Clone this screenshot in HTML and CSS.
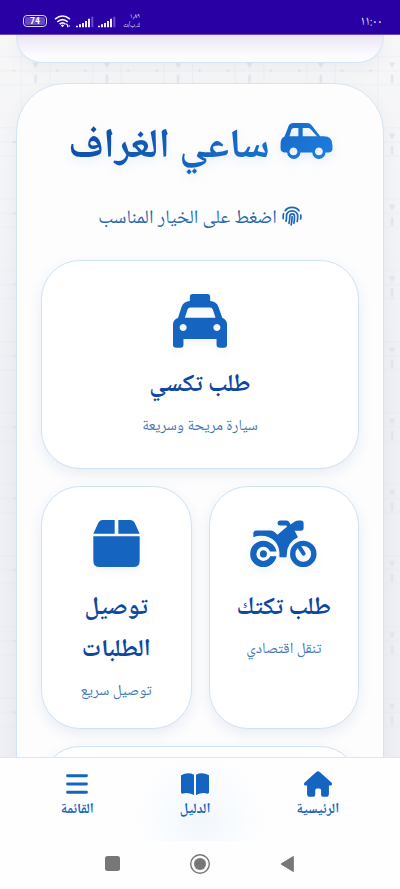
FILE: index.html
```html
<!DOCTYPE html>
<html lang="ar" dir="rtl">
<head>
<meta charset="utf-8">
<meta name="viewport" content="width=device-width">
<title>ساعي الغراف</title>
<link rel="stylesheet" href="styles.css">
</head>
<body>
<div class="screen">
  <header class="status">
    <span class="clock">١١:٠٠</span>
    <div class="indicators">
      <div class="speed"><b>١٫٨٩</b><b>ك.ب/ث</b></div>
      <svg class="signals" viewBox="0 0 120 36" width="40" height="12">
        <path fill="#efeafc" d="M0 29h6v5H0zM9 25h6v9H9zM18 21h6v13h-6zM27 15h6v19h-6zM36 8h6v26h-6zM66 29h6v5h-6zM75 25h6v9h-6zM84 21h6v13h-6zM93 15h6v19h-6zM102 8h6v26h-6z"/>
        <path fill="#6c4cc9" d="M46 2h6v32h-6zM112 2h6v32h-6z"/>
      </svg>
      <svg class="wifi" viewBox="0 0 50 40" width="17" height="13"><path fill="none" stroke="#f4f0ff" stroke-width="5" d="M2 13Q25-7 48 13M9 21Q25 7 41 21M16 28Q25 20 34 28"/><path d="M20 32q5-5 10 0l-5 6zM34 30l4-5 4 5v8h-3v-7zM42 32h7l-4 6z" fill="#f4f0ff"/></svg>
      <span class="battery"><i>74</i></span>
    </div>
  </header>

  <main class="content">
    <svg class="backdrop" width="400" height="723" aria-hidden="true">
      <defs>
        <pattern id="grid" width="71.3" height="71.3" patternUnits="userSpaceOnUse">
          <path d="M21.5 0v71.3M50 0v71.3M0 21.6h71.3M0 35.7h71.3M0 49.7h71.3" stroke="#dfe6f0" stroke-width=".5"/>
          <path d="M32.3 27.200h6.600l-3.300 6.300zM34.300 39.700h2.600v8.400h-2.600z" fill="#dfe4ed"/>
          <circle cx="14.200" cy="35.700" r="1.400" fill="#dce5f0"/><circle cx="57" cy="35.700" r="1.400" fill="#dce5f0"/>
        </pattern>
      </defs>
      <rect width="400" height="723" fill="url(#grid)"/>
    </svg>
    <section class="panel previous"></section>
    <section class="panel main">
      <h1 class="title">
        <svg viewBox="692 69 157 109" width="53" height="36"><defs><linearGradient id="car" x1="0" y1="0" x2="1" y2=".6"><stop stop-color="#1769c6"/><stop offset="1" stop-color="#1c7bdc"/></linearGradient></defs><path fill="url(#car)" fill-rule="evenodd" d="M731 69h41q9 0 14 7l26 33h11q26 0 26 27v10q0 11-10 12h-11a20 20 0 0 1-40 0h-36a20 20 0 0 1-40 0h-8q-12-1-12-12v-14q0-17 12-22l12-31q4-10 15-10zM732 84q-5 0-7 5l-6 20h27V84zM759 84v25h43l-19-21q-3-4-8-4zM731 143a12 12 0 1 0 .1 0zM808 143a12 12 0 1 0 .1 0z"/></svg>
        <span class="t-title">ساعي الغراف</span>
      </h1>
      <p class="hint">
        <svg viewBox="0 0 20 20" width="20" height="20" fill="none" stroke="#1c65b8" stroke-width="1.7" stroke-linecap="round"><path d="M3.2 4.7C6 .2 14 .2 17 4.7M1.2 12.5v-2.3c0-1.2.1-1.8.4-2.5M18.8 9c.2 1.7.1 2.700-.2 4M4 15.200c.5-1.600.5-3.200.5-5 0-7 11-7.300 11.200 0 0 2 0 3.600-.5 5.200M7 17.300c.7-2.200.8-4.500.8-7 0-3.300 4.700-3.300 4.700 0 0 2.600-.1 4.600-.6 6.800M10.100 10.500c0 3-.2 5.500-.9 8.400"/></svg>
        <span class="t-hint">اضغط على الخيار المناسب</span>
      </p>
      <div class="options">
        <article class="card wide">
          <svg viewBox="160 42 160 160" width="54" height="54"><path fill="#1565c0" fill-rule="evenodd" d="M218 42h44q8 0 8 8v13q19 1 25 18l11 31q14 6 14 20v60q0 9-9 9h-12q-10 0-10-9v-17h-98v17q0 9-9 9h-12q-10 0-10-9v-60q0-14 15-20l10-31q6-17 25-18V50q0-8 8-8zM211 82q-6 0-8 6l-8 24h91l-8-24q-2-6-8-6zM190 131a10.500 10.500 0 1 0 .1 0zM290 131a10.500 10.500 0 1 0 .1 0z"/></svg>
          <h2>طلب تكسي</h2>
          <p>سيارة مريحة وسريعة</p>
        </article>
        <article class="card">
          <svg viewBox="122 59 200 140" width="67" height="47">
            <path fill="#1565c0" d="M209 60h22q6 0 9 6l3 6 13-9q5-3 12-3h6q8 0 8 8v15q0 8-8 8h-13q-4 0-6-1l10 20q-32 15-33 50l-1 10h-21q2-31-13-47-16-17-42-17-13 0-23 4V99q0-9 9-9h42q8 0 14 6l7 7 29-25-3-3h-19q-7 0-7-7.500t7-7.500z"/>
            <circle cx="162" cy="160" r="43" fill="#fff"/>
            <path d="M132 109q15-5 33-2 41 7 45 63" fill="none"/>
            <circle cx="162" cy="160" r="39.500" fill="#1565c0"/>
            <circle cx="162" cy="160" r="21" fill="#fff"/>
            <circle cx="162" cy="160" r="10.500" fill="#1565c0"/>
            <path d="M178 153h27v14h-27z" fill="#fff"/>
            <circle cx="281" cy="160" r="31.500" fill="none" stroke="#1565c0" stroke-width="16"/>
            <path d="m271 142 11 17" stroke="#1565c0" stroke-width="12" stroke-linecap="round"/>
          </svg>
          <h2>طلب تكتك</h2>
          <p>تنقل اقتصادي</p>
        </article>
        <article class="card">
          <svg viewBox="189 59 139 141" width="47" height="47"><path fill="#1565c0" d="M216 59h37v41h-64l15-33q4-8 12-8zM264 59h37q8 0 12 8l15 33h-64zM189 108h139v73q0 19-19 19H208q-19 0-19-19z"/></svg>
          <h2>توصيل<br>الطلبات</h2>
          <p>توصيل سريع</p>
        </article>
        <article class="card wide"></article>
      </div>
    </section>
  </main>

  <nav class="tabs">
    <a class="tab"><svg viewBox="315 154 82 75" width="28" height="26"><path fill="#1565c0" d="M351 156q5-4 10 0l35 32q3 7-3 8h-5v24q0 9-8 9h-10q-5 0-5-6v-13q0-5-5-5h-7q-5 0-5 5v13q0 6-6 6h-10q-8 0-8-9v-24h-5q-6-1-3-8z"/></svg><span>الرئيسية</span></a>
    <a class="tab active"><svg viewBox="0 0 84 66" width="28" height="22"><path fill="#1565c0" d="M0 7Q20-4 39 5v61Q20 56 4 62q-4 0-4-4zM45 5Q64-4 84 7v51q0 4-4 4-16-6-35 4z"/></svg><span>الدليل</span></a>
    <a class="tab"><svg viewBox="0 0 64 57" width="22" height="19"><path stroke="#1565c0" stroke-width="8.500" stroke-linecap="round" d="M4.500 4.500h55M4.500 28.500h55M4.500 52.500h55"/></svg><span>القائمة</span></a>
  </nav>
  <footer class="system">
    <svg viewBox="0 0 15 18" width="15" height="18"><path d="M13.300 1.500v15L1 9z" fill="#777" stroke="#777" stroke-linejoin="round"/></svg>
    <svg viewBox="0 0 20 20" width="20" height="20"><circle cx="10" cy="10" r="9.300" fill="none" stroke="#777" stroke-width="1.400"/><circle cx="10" cy="10" r="6" fill="#777"/></svg>
    <svg viewBox="0 0 15 15" width="15" height="15"><rect width="15" height="15" rx="2.500" fill="#777"/></svg>
  </footer>
</div>
</body>
</html>
```
FILE: styles.css
```css
* { box-sizing: border-box; margin: 0; padding: 0; }
body { width: 400px; height: 889px; overflow: hidden; font-family: "Noto Naskh Arabic", "Noto Sans Arabic", serif; color: #1565c0; }
svg { display: block; flex: none; overflow: visible; }
span { display: inline-block; white-space: nowrap; }
.screen { display: flex; flex-direction: column; height: 889px; background: #fff; }
.status { flex: none; display: flex; justify-content: space-between; height: 34.500px; padding: 14px 18px 0 23px; background: #2900a3; color: #f4f0ff; border-bottom: 1px solid #6a4cc2; }
.clock { font-size: 13px; line-height: 15px; transform: translateY(1px) scaleX(.83); transform-origin: right; }
.indicators { display: flex; align-items: flex-start; }
.speed { width: 20px; height: 17px; margin-top: -2px; font-size: 6.500px; line-height: 9px; }
.speed b { display: block; font-weight: 400; text-align: right; white-space: nowrap; }
.speed b:first-child { line-height: 9px; }
.signals { margin: 1.500px 4px 0 0; }
.wifi { margin: 1px 5px 0 0; }
.battery { display: flex; margin: 1px 7px 0 0; width: 24px; height: 12px; padding: 1px; border: 1px solid #ddd5f5; border-radius: 4px; }
.battery i { flex: 1; border-radius: 2px; background: #6849be; font: bold 8.500px/8.500px Roboto, sans-serif; text-align: center; color: #fff; }
.content { position: relative; flex: 1; overflow: hidden; background: linear-gradient(180deg, #f7f7f8, #f3f4f7 25%, #eff0f5 50%); }
.backdrop { position: absolute; left: 0; top: 0; opacity: .85; }
.panel { position: relative; width: 368.500px; margin: 0 auto; border: 1px solid #d3e5f4; background: #fdfdfe; box-shadow: 0 5px 18px rgba(30, 60, 110, .06); }
.previous { height: 28px; border-top: 0; border-radius: 0 0 26px 26px; background: linear-gradient(#eae5f6, #fbfaff 70%, #fdfdff); }
.main { margin-top: 20px; height: 900px; padding: 34px 24px; border-radius: 49px; }
.title { display: flex; justify-content: center; align-items: center; gap: 10px; height: 50px; padding-left: 1px; font-size: 41.200px; font-weight: 700; filter: drop-shadow(0 4px 5px rgba(21, 101, 192, .1)); }
.title svg { margin-top: -3px; }
.t-title { background: linear-gradient(135deg, #0d47a1, #1976d2); background-clip: text; color: transparent; line-height: 80px; margin-top: 10px; }
.hint { display: flex; justify-content: center; align-items: center; gap: 5px; height: 30px; margin-top: 33px; font-size: 19.200px; color: #2467ad; }
.t-hint { margin-top: 6px; }
.options { display: grid; grid-template-columns: 1fr 1fr; gap: 17px; margin-top: 29px; }
.card { display: flex; flex-direction: column; align-items: center; height: 243px; padding-top: 33px; border: 1px solid #cfe3f3; border-radius: 39px; background: #fff; box-shadow: 0 5px 14px rgba(30, 70, 120, .09); text-align: center; }
.card.wide { grid-column: span 2; height: 209px; }
.card svg { filter: drop-shadow(0 4px 4px rgba(20, 60, 110, .06)); }
.card h2 { margin-top: 21px; font-size: 24.300px; line-height: 42px; font-weight: 700; color: #0d47a1; }
.card p { margin-top: 7px; font-size: 15.300px; line-height: 26px; color: #4777b2; white-space: nowrap; }
.wide h2 { margin-top: 17px; }
.tabs { flex: none; display: flex; justify-content: center; gap: 86px; height: 84px; border-top: 1px solid #d9e8f4; background: radial-gradient(circle at 50% 75%, #f2f7fc 0, #fafcff 45px, #fefefe 65px); }
.tab { display: flex; flex-direction: column; align-items: center; }
.tab svg { height: 26px; margin-top: 13px; }
.tab span { font-size: 14px; line-height: 27px; font-weight: 700; }
.system { flex: none; display: flex; justify-content: center; align-items: flex-start; gap: 70px; height: 48px; background: #fefefe; padding-top: 13px; }
.system svg:first-child { margin-top: 1px; }
.system svg:last-child { margin-top: 2px; }
```
